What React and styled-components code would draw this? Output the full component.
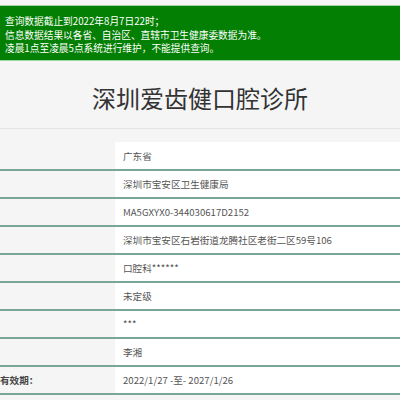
import styled, { createGlobalStyle } from "styled-components";

const GlobalStyle = createGlobalStyle`
  body {
    margin: 0;
    background: #f5f5f5;
    font-family: "Noto Sans CJK SC", "Noto Sans", sans-serif;
    overflow: hidden;
  }
`;

const Page = styled.div`
  width: 400px;
  height: 400px;
  padding-top: 5px;
  box-sizing: border-box;
`;

const Notice = styled.div`
  background: #037f03;
  border-top: 1px solid #9fd89f;
  border-bottom: 1px solid #9fd89f;
  color: #fff;
  font-size: 9.7px;
  padding: 9px 5px 0;
  height: 56px;
  box-sizing: border-box;
`;

const NoticeLine = styled.div`
  height: 13.5px;
  line-height: 13.5px;
  white-space: nowrap;
`;

const Title = styled.h1`
  margin: 0;
  height: 68px;
  display: flex;
  align-items: center;
  justify-content: center;
  font-size: 24px;
  font-weight: 400;
  color: #333;
  border-bottom: 1px solid #e4e4e4;
  padding-top: 6px;
  box-sizing: border-box;
`;

const Table = styled.div`
  margin-top: 13px;
`;

const Row = styled.div`
  display: flex;
  height: 28px;
  border-bottom: 2px solid #78a797;
  box-sizing: border-box;
  &:first-child {
    height: 29px;
  }
`;

const Label = styled.div`
  width: 115px;
  flex-shrink: 0;
  display: flex;
  align-items: center;
  font-size: 9.6px;
  font-weight: 700;
  color: #444;
`;

const Value = styled.div`
  flex: 1;
  background: #fff;
  display: flex;
  align-items: center;
  padding-left: 8px;
  font-size: 9.6px;
  color: #555;
`;

const rows = [
  ["", "广东省"],
  ["", "深圳市宝安区卫生健康局"],
  ["", "MA5GXYX0-344030617D2152"],
  ["", "深圳市宝安区石岩街道龙腾社区老街二区59号106"],
  ["", "口腔科******"],
  ["", "未定级"],
  ["", "***"],
  ["", "李湘"],
  ["有效期：", "2022/1/27 -至- 2027/1/26"],
];

export default function App() {
  return (
    <>
      <GlobalStyle />
      <Page>
        <Notice>
          <NoticeLine>查询数据截止到2022年8月7日22时；</NoticeLine>
          <NoticeLine>信息数据结果以各省、自治区、直辖市卫生健康委数据为准。</NoticeLine>
          <NoticeLine>凌晨1点至凌晨5点系统进行维护，不能提供查询。</NoticeLine>
        </Notice>
        <Title>深圳爱齿健口腔诊所</Title>
        <Table>
          {rows.map(([label, value], i) => (
            <Row key={i}>
              <Label>{label}</Label>
              <Value>{value}</Value>
            </Row>
          ))}
        </Table>
      </Page>
    </>
  );
}
